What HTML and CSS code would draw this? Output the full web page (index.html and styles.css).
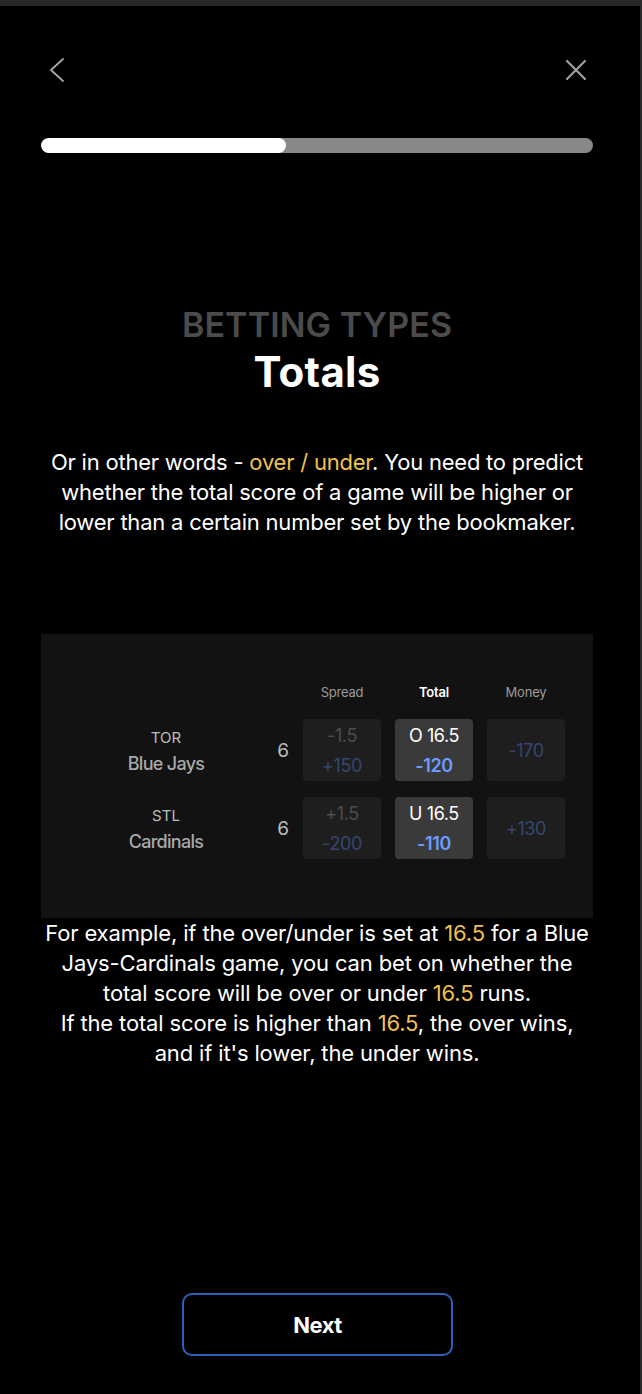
FILE: index.html
```html
<!DOCTYPE html>
<html lang="en">
<head>
<meta charset="utf-8">
<title>Betting Types - Totals</title>
<link rel="stylesheet" href="styles.css">
</head>
<body>
<div class="app">
  <div class="screen">
    <nav class="nav">
      <svg class="icon" width="24" height="24" viewBox="0 0 24 24"><path d="M18 1 L6 12 L18 23" fill="none" stroke="#a8a8a8" stroke-width="1.8" stroke-linecap="round" stroke-linejoin="round"/></svg>
      <svg class="icon" width="24" height="24" viewBox="0 0 24 24"><path d="M3 3 L21 21 M21 3 L3 21" fill="none" stroke="#a0a0a0" stroke-width="2.2" stroke-linecap="round"/></svg>
    </nav>
    <div class="progress"><div class="progress-fill" style="width:44.4%"></div></div>

    <div class="kicker">BETTING TYPES</div>
    <h1 class="title">Totals</h1>

    <p class="text intro">Or in other words - <span class="hl">over / under</span>. You need to predict whether the total score of a game will be higher or lower than a certain number set by the bookmaker.</p>

    <div class="panel">
      <div class="odds">
        <div></div><div></div>
        <div class="head">Spread</div>
        <div class="head active">Total</div>
        <div class="head">Money</div>

        <div class="team"><span class="abbr">TOR</span><span class="name">Blue Jays</span></div>
        <div class="score">6</div>
        <div class="cell"><span class="line dim">-1.5</span><span class="price dimblue">+150</span></div>
        <div class="cell sel"><span class="line">O 16.5</span><span class="price blue">-120</span></div>
        <div class="cell"><span class="price dimblue">-170</span></div>

        <div class="team"><span class="abbr">STL</span><span class="name">Cardinals</span></div>
        <div class="score">6</div>
        <div class="cell"><span class="line dim">+1.5</span><span class="price dimblue">-200</span></div>
        <div class="cell sel"><span class="line">U 16.5</span><span class="price blue">-110</span></div>
        <div class="cell"><span class="price dimblue">+130</span></div>
      </div>
    </div>

    <p class="text example">For example, if the over/under is set at <span class="hl">16.5</span> for a Blue Jays-Cardinals game, you can bet on whether the total score will be over or under <span class="hl">16.5</span> runs.<br>If the total score is higher than <span class="hl">16.5</span>, the over wins,<br>and if it's lower, the under wins.</p>

    <div class="footer">
      <button class="next" type="button">Next</button>
    </div>
  </div>
</div>
</body>
</html>
```

FILE: styles.css
```css
* { box-sizing: border-box; }
html, body { margin: 0; padding: 0; background: #000; }
body { font-family: Inter, "Noto Sans", sans-serif; color: #fff; }

.app {
  width: 642px;
  height: 1394px;
  border-top: 6px solid #29292b;
  border-right: 2px solid #2a2a2b;
  background: #000;
  display: flex;
  flex-direction: column;
}

.screen {
  flex: 1;
  display: flex;
  flex-direction: column;
  padding: 0 47px 38px 41px;
}

.nav {
  display: flex;
  justify-content: space-between;
  margin-top: 52px;
  padding: 0 5px 0 4px;
  height: 24px;
}
.icon { display: block; }

.progress {
  margin-top: 56px;
  height: 15px;
  border-radius: 8px;
  background: #888888;
  overflow: hidden;
}
.progress-fill {
  height: 100%;
  background: #fff;
  border-radius: 8px;
}

.kicker {
  margin-top: 152px;
  font-size: 34px;
  line-height: 40px;
  font-weight: 600;
  letter-spacing: 0.1px;
  color: #4b4b4b;
  text-align: center;
}
.title {
  margin: 2px 0 0;
  font-size: 42px;
  line-height: 50px;
  font-weight: 700;
  letter-spacing: 0.3px;
  text-align: center;
  color: #fff;
}

.text {
  margin: 0;
  font-size: 22px;
  line-height: 30px;
  text-align: center;
  color: #fff;
  letter-spacing: -0.15px;
}
.intro { margin-top: 50px; letter-spacing: -0.22px; }
.hl { color: #f0c152; }

.panel {
  margin-top: 97px;
  height: 284px;
  background: #121212;
  padding: 47px 28px 0 44px;
}
.odds {
  display: grid;
  grid-template-columns: 162px 28px 78px 78px 78px;
  grid-template-rows: 22px 62px 62px;
  column-gap: 14px;
  row-gap: 16px;
  align-items: center;
}
.head {
  text-align: center;
  font-size: 13px;
  color: #9a9a9a;
  letter-spacing: -0.2px;
}
.head.active { color: #fff; font-weight: 600; }

.team {
  display: flex;
  flex-direction: column;
  align-items: center;
  padding-top: 3px;
}
.abbr { font-size: 15px; line-height: 24px; color: #bdbdbd; }
.name { font-size: 18px; line-height: 28px; color: #a9a9a9; font-weight: 500; letter-spacing: -0.7px; }

.score {
  text-align: right;
  font-size: 19px;
  color: #bdbdbd;
}

.cell {
  height: 62px;
  border-radius: 4px;
  background: #1e1e1e;
  display: flex;
  flex-direction: column;
  align-items: center;
  justify-content: center;
  padding-top: 2px;
  font-size: 18px;
  line-height: 30px;
  letter-spacing: -0.4px;
}
.cell.sel { background: #3a3a3a; }
.line { color: #fff; }
.line.dim { color: #4d4d4d; }
.price.blue { color: #6b9cff; font-weight: 600; }
.price.dimblue { color: #34476f; }

.example { margin-top: 0; }

.footer {
  margin-top: auto;
  display: flex;
  justify-content: center;
}
.next {
  width: 271px;
  height: 63px;
  margin-left: 1px;
  border: 2px solid #2e60bd;
  border-radius: 10px;
  background: #000;
  color: #fff;
  font-family: Inter, "Noto Sans", sans-serif;
  font-size: 22px;
  font-weight: 700;
  letter-spacing: -0.5px;
}
```
